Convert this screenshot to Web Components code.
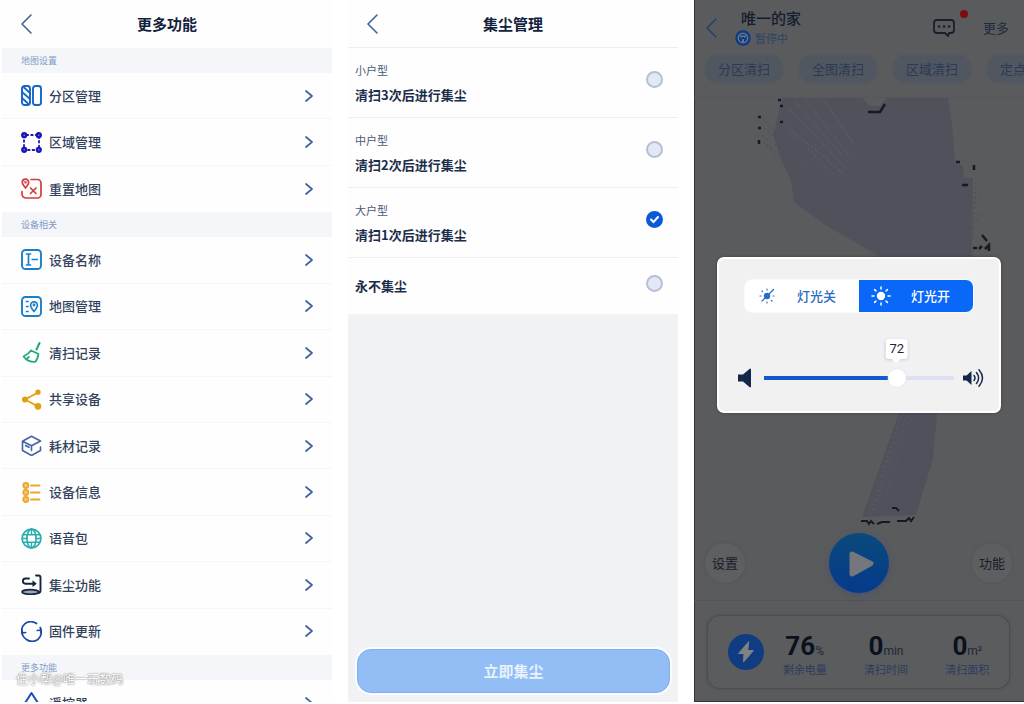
<!DOCTYPE html>
<html lang="zh-CN">
<head>
<meta charset="utf-8">
<meta name="viewport" content="width=device-width, initial-scale=1">
<title>扫地机器人</title>
<style>
  html, body { margin: 0; height: 100%; background: #fff; }
  body { font-family: "Noto Sans CJK SC", sans-serif; color: #1c2d4a; }
</style>
</head>
<body>
<robot-app></robot-app>

<script>
const ICONS = {
  back: ['0 0 12 20', '<path d="M11 1L2 10l9 9" stroke-width="1.6"/>'],
  next: ['0 0 10 12', '<path d="M2 1l6 5-6 5" stroke-width="1.7"/>'],
  zones: ['0 0 21 21', '<g stroke-width="1.9"><rect x="1" y="1" width="8" height="19" rx="2.5"/><rect x="12" y="1" width="8" height="19" rx="2.5"/></g><path d="M3 2.500l6 5.500M1 7l8 7M1 13l6 5.500"/>'],
  area: ['0 0 21 21', '<path d="M3 3h15v15H3z" stroke-width="1.800" stroke-dasharray="1.600 3" stroke-dashoffset="2"/><g fill="currentColor" stroke="none"><circle cx="3.200" cy="3.200" r="3.100"/><circle cx="17.800" cy="3.200" r="3.100"/><circle cx="3.200" cy="17.800" r="3.100"/><circle cx="17.800" cy="17.800" r="3.100"/></g><g fill="#8a88e0" stroke="none"><circle cx="3.200" cy="3.200" r=".8"/><circle cx="17.800" cy="3.200" r=".8"/><circle cx="3.200" cy="17.800" r=".8"/><circle cx="17.800" cy="17.800" r=".8"/></g>'],
  reset: ['0 0 21 21', '<path d="M10 1.500h6.500a3.500 3.500 0 0 1 3.500 3.500v11.500a3.500 3.500 0 0 1-3.500 3.500H5a4 4 0 0 1-4-4v-2.500M9.500 10l5.500 5.500M15 10l-5.500 5.500"/><path d="M4.500 10C2 7 1.300 5.800 1.300 4.300a3.200 3.200 0 0 1 6.400 0C7.700 5.800 7 7 4.500 10z"/><circle cx="4.500" cy="4.300" r=".5"/>'],
  name: ['0 0 21 21', '<rect x="1" y="1" width="19" height="19" rx="3.500" stroke-width="1.900"/><path d="M5.500 5h4M5.500 16h4M7.500 5v11"/><path d="M11 10.500h5.500" stroke-width="1.300"/>'],
  map: ['0 0 21 21', '<rect x="1" y="1" width="19" height="19" rx="3.500" stroke-width="1.900"/><path d="M5.500 5.500h1.500M5.500 10.500h1.500M5.500 15.500h1.500"/><path d="M13 15.500c-2.600-3.300-3.400-4.600-3.400-6.300a3.400 3.400 0 0 1 6.800 0c0 1.700-.8 3-3.400 6.300z"/><circle cx="13" cy="9" r=".6"/>'],
  broom: ['0 0 21 21', '<path d="M18.500 1l-3 6.500" stroke-width="2"/><path d="M10 8.500l7.500 3.500M10 8.500C8 11.500 5.500 13 2.500 14.500 5 18 9 20 14 20c2-2 3-5 3.500-8M6.500 16l1.500-1.200"/>'],
  share: ['0 0 21 21', '<path d="M17 3.500L4 10.500l13 7" stroke-width="1.900"/><g fill="currentColor"><circle cx="17" cy="3.200" r="1.800"/><circle cx="4" cy="10.500" r="2.200"/><circle cx="17" cy="17.300" r="2.500"/></g>'],
  box: ['0 0 21 21', '<path d="M1.500 6.500v9l9 5M19.500 12v3.500l-9 5M1.500 6.200l9-5 9 4.800-9 4.800zM10.500 11v4.500M4.500 10.500l3.500 1.800" stroke-width="1.600"/>'],
  list: ['0 0 21 21', '<path d="M10 3.500h8.500M10 10.500h8.500M10 17.500h8.500" stroke-width="1.900"/><g fill="#f4c672"><circle cx="4.800" cy="3.500" r="2.600"/><circle cx="4.800" cy="10.500" r="2.600"/><circle cx="4.800" cy="17.500" r="2.600"/></g>'],
  globe: ['0 0 21 21', '<circle cx="10.500" cy="10.500" r="9.400"/><ellipse cx="10.500" cy="10.500" rx="4.600" ry="9.300"/><path d="M2 6.800h17M2 14.200h17M10.500 1v5M10.500 15v5M1.500 10.500h4.200M15.300 10.500h4.200" stroke-width="1.500"/>'],
  dust: ['0 0 21 21', '<path d="M15 1.500h2.500q2 0 2 2v13q0 2.500-2.500 2.500M12.500 9.700H4.500a2.600 2.600 0 0 1 0-5.200H8" stroke-width="1.900"/><path d="M11.500 6.300l4.300 3.400-4.300 3.400z" fill="currentColor" stroke="none"/><ellipse cx="9.500" cy="18" rx="8.500" ry="2.300" fill="#9aa6b8"/>'],
  refresh: ['0 0 21 21', '<path d="M1.800 14.500A9.300 9.300 0 0 1 15.500 2.500M19.200 6.500A9.300 9.300 0 0 1 5.500 18.500M1 8.500l.5 3.500 3.200-.5M20 12.500l-.5-3.500-3.200.5M5.500 18.500A9.300 9.300 0 0 1 1.800 14.500" stroke-width="1.700"/>'],
  remote: ['0 0 21 21', '<path d="M4 11L10.500 1 17 11v7H4z" stroke-width="2"/>'],
  chat: ['0 0 22 20', '<path d="M4 2h14q3 0 3 3v7q0 3-3 3h-2l-1 3-3-3H4q-3 0-3-3V5q0-3 3-3z" stroke-width="1.800"/><path d="M6 8.500h.1M11 8.500h.1M16 8.500h.1" stroke-width="2.600"/>'],
  robot: ['0 0 16 16', '<circle cx="8" cy="8" r="7.700" fill="#0b3a86" stroke="none"/><circle cx="8" cy="8" r="4.700" stroke="#6d7683" stroke-width="1.500"/><path d="M4 5.500h8l-3 3v4H7v-4z" fill="#6d7683" stroke="none"/><circle cx="8" cy="8" r="1.300" fill="#0b3a86" stroke="none"/>'],
  lamp: ['0 0 20 20', '<circle cx="10" cy="10" r="4.200" fill="currentColor" stroke="none"/><path d="M10 1v2M10 17v2M1 10h2M17 10h2M3.600 3.600L5 5M15 15l1.400 1.400M3.600 16.400L5 15M15 5l1.400-1.400" stroke-width="1.500"/>'],
  lampOff: ['0 0 20 20', '<circle cx="10" cy="10" r="3.200" fill="currentColor" stroke="none"/><path d="M10 3v1M10 16v1M3 10h1M16 10h1M5 5l.6.6M14.400 14.400l.6.600M5 15L16.500 3.500" stroke-width="1.200"/>'],
  mute: ['0 0 14 20', '<path d="M0 6.500h5l7-6q1 0 1 1v17q0 1-1 1l-7-6H0z" fill="currentColor" stroke="none"/>'],
  loud: ['0 0 22 20', '<path d="M0 7.500h3.500l5-4.500v14l-5-4.500H0z" fill="currentColor" stroke="none"/><path d="M11 7.500q2 2.500 0 5M13.500 4.500q4.200 5.500 0 11M16 1.800q7 8.200 0 16.400" stroke-width="1.500"/>'],
  play: ['0 0 60 60', '<path d="M23 21l19 9.500-19 10.500z" fill="currentColor" stroke-width="5"/>'],
  bolt: ['0 0 36 36', '<path d="M20.500 8L10.500 19.500h5.500L15.500 28l10-11.500H20z" fill="currentColor" stroke-width="1"/>']
};

function define(name, html, setup) {
  const template = document.createElement('template');
  template.innerHTML = html;
  customElements.define(name, class extends HTMLElement {
    connectedCallback() {
      if (this.shadowRoot) return;
      const root = this.attachShadow({ mode: 'open' });
      root.append(template.content.cloneNode(true));
      if (setup) setup(root, this);
    }
  });
}

const RESET = `
  * { box-sizing: border-box; }
  button { font: inherit; color: inherit; background: none; border: 0; padding: 0; margin: 0; cursor: pointer; }
  h1, h2, p { margin: 0; font: inherit; }
`;

define('app-icon', `<style>
  :host { display: block; flex: none; line-height: 0; }
  svg { display: block; width: 100%; height: 100%; fill: none; stroke: currentColor; stroke-width: 1.7; stroke-linecap: round; stroke-linejoin: round; }
</style><svg aria-hidden="true"></svg>`, (root, host) => {
  const [box, shapes] = ICONS[host.getAttribute('name')];
  const svg = root.querySelector('svg');
  svg.setAttribute('viewBox', box);
  svg.innerHTML = shapes;
});

define('nav-header', `<style>${RESET}
  :host { display: grid; grid-template-columns: 48px 1fr 48px; align-items: center; flex: none; height: 48px; background: #fefefe; }
  button { justify-self: start; padding-left: 18px; color: #42629c; }
  app-icon { width: 12px; height: 20px; }
  h1 { text-align: center; font-size: 15px; line-height: 24px; font-weight: 700; color: #12213c; }
</style>
<button type="button" aria-label="返回"><app-icon name="back"></app-icon></button><h1><slot></slot></h1>`);

define('menu-row', `<style>${RESET}
  :host { display: flex; flex: 1 0 46px; background: #fefefe; border-bottom: 1px solid #f5f6f9; box-sizing: border-box; }
  :host(:last-of-type) { border-bottom-color: transparent; }
  button { flex: 1; display: flex; align-items: center; gap: 7px; padding: 0 18px 0 19px; text-align: left; }
  .mark { width: 21px; height: 21px; }
  span { flex: 1; font-size: 13px; line-height: 20px; font-weight: 500; color: #33425c; }
  .go { width: 10px; height: 12px; color: #42629c; }
</style>
<button type="button"><span><slot></slot></span><app-icon class="go" name="next"></app-icon></button>`,
(root, host) => {
  const icon = document.createElement('app-icon');
  icon.className = 'mark';
  icon.setAttribute('name', host.getAttribute('icon'));
  icon.style.color = host.getAttribute('tint');
  root.querySelector('button').prepend(icon);
});

define('menu-group', `<style>${RESET}
  :host { display: flex; flex-direction: column; flex: var(--rows, 1) 0 auto; }
  h2 { flex: none; height: 25px; padding-left: 19px; font-size: 9px; line-height: 25px; color: #7f9ac6; background: #f5f6fa; }
</style><h2></h2><slot></slot>`, (root, host) => {
  root.querySelector('h2').textContent = host.getAttribute('label');
  host.style.setProperty('--rows', host.children.length);
});

define('settings-panel', `<style>
  :host { display: flex; flex-direction: column; position: relative; overflow: hidden; background: #fefefe; }
  .cut { flex: 0 0 47px; overflow: hidden; }
  .credit { position: absolute; left: 14px; bottom: 14px; font-size: 12px; line-height: 18px; color: #fff; text-shadow: 0 0 2px #777, 0 0 1px #999; }
</style>
<nav-header>更多功能</nav-header>
<menu-group label="地图设置">
  <menu-row icon="zones" tint="#1466c8">分区管理</menu-row>
  <menu-row icon="area" tint="#1a16b4">区域管理</menu-row>
  <menu-row icon="reset" tint="#d23c3c">重置地图</menu-row>
</menu-group>
<menu-group label="设备相关">
  <menu-row icon="name" tint="#1b7fc8">设备名称</menu-row>
  <menu-row icon="map" tint="#1b7fc8">地图管理</menu-row>
  <menu-row icon="broom" tint="#1fa878">清扫记录</menu-row>
  <menu-row icon="share" tint="#e0a010">共享设备</menu-row>
  <menu-row icon="box" tint="#4464a4">耗材记录</menu-row>
  <menu-row icon="list" tint="#eba62c">设备信息</menu-row>
  <menu-row icon="globe" tint="#2cacb0">语音包</menu-row>
  <menu-row icon="dust" tint="#16243e">集尘功能</menu-row>
  <menu-row icon="refresh" tint="#1f4aa8">固件更新</menu-row>
</menu-group>
<menu-group class="cut" label="更多功能">
  <menu-row icon="remote" tint="#1c4cc0">遥控器</menu-row>
</menu-group>
<div class="credit">住小帮@唯一玩数码</div>`);

define('dust-panel', `<style>${RESET}
  :host { display: flex; flex-direction: column; background: #f1f2f4; }
  nav-header, .row { border-bottom: 1px solid #eceef1; }
  fieldset { margin: 0; padding: 0; border: 0; min-width: 0; }
  .row { display: flex; align-items: center; height: 70px; padding: 0 15px 0 7px; background: #fefefe; }
  .row.single { height: 56px; border: 0; }
  .text { flex: 1; display: flex; flex-direction: column; gap: 5px; }
  small { font-size: 11px; line-height: 20px; color: #4a5a75; }
  strong { font-size: 13px; line-height: 20px; font-weight: 700; color: #1c2d4a; }
  input { appearance: none; flex: none; width: 17px; height: 17px; margin: 0 0 6px; border: 2px solid #b6c0d2; border-radius: 50%; background: #e3e8f6; }
  input:checked { border-color: #0a5ad8; background: #0a5ad8 url('data:image/svg+xml,<svg xmlns="http://www.w3.org/2000/svg" viewBox="0 0 13 13" fill="none" stroke="white" stroke-width="2" stroke-linecap="round"><path d="M3 6.500l2.500 2.500 4.500-5"/></svg>') center / 13px 13px; }
  .go { margin: auto 8px 9px 9px; height: 44px; border-radius: 14px; border: 1px solid #7fafee; background: #92bdf5; box-shadow: 0 0 0 2px #fafcff; font-size: 15px; line-height: 24px; font-weight: 700; color: #e8f3ff; }
</style>
<nav-header>集尘管理</nav-header>
<fieldset aria-label="集尘频率">
  <label class="row"><span class="text"><small>小户型</small><strong>清扫3次后进行集尘</strong></span><input type="radio" name="freq"></label>
  <label class="row"><span class="text"><small>中户型</small><strong>清扫2次后进行集尘</strong></span><input type="radio" name="freq"></label>
  <label class="row"><span class="text"><small>大户型</small><strong>清扫1次后进行集尘</strong></span><input type="radio" name="freq" checked></label>
  <label class="row single"><span class="text"><strong>永不集尘</strong></span><input type="radio" name="freq"></label>
</fieldset>
<button class="go" type="button">立即集尘</button>`);

define('mode-chip', `<style>${RESET}
  :host { display: block; flex: none; }
  button { display: block; width: 78px; height: 28px; border-radius: 14px; background: #515761; box-shadow: 0 0 2px #4f555f; font-size: 13px; line-height: 28px; color: #2b3a55; white-space: nowrap; }
</style><button type="button"><slot></slot></button>`);

define('stat-item', `<style>${RESET}
  :host { display: flex; flex-direction: column; align-items: center; padding-top: 6px; white-space: nowrap; }
  .value { font: 700 26px/28px Roboto, sans-serif; color: #0c121d; }
  .unit { font: 400 12px/14px Roboto, sans-serif; color: #1d2839; }
  .label { font-size: 11px; line-height: 18px; color: #2b3d5c; }
</style><div><span class="value"></span><span class="unit"></span></div><div class="label"><slot></slot></div>`, (root, host) => {
  root.querySelector('.value').textContent = host.getAttribute('value');
  root.querySelector('.unit').textContent = host.getAttribute('unit');
});

define('floor-map', `<style>
  :host { display: block; }
  svg { display: block; width: 100%; height: 100%; fill: none; }
</style>
<svg viewBox="0 0 330 503" preserveAspectRatio="xMidYMin slice" aria-hidden="true">
  <path fill="#50515b" d="M88 0h80l8 8h10l6-8h62l3 20 2 16 2 28 8 4 1 12h9l-1 74-35 161-4 46-17 56-54 2 39-110 30-115-17-12-40-27-47-27-33-24-3-21-10-22-8-24z"/>
  <g stroke="#5c5d63" stroke-width="1" stroke-dasharray="9 2 3 1"><path d="M101 4l48 54M112 2l48 62M129 0l32 48M94 10l62 64M85 22l65 54"/></g>
  <g stroke="#5c5d63" stroke-width="1.5" stroke-dasharray="1 4"><path d="M96 34l46 44M104 28l42 46M78 24l40 52M92 22l44 54M206 320l-32 98M211 322l-34 96M216 320l-30 96M200 344l-22 70"/></g>
  <g stroke="#4b4c56" stroke-width="1" stroke-dasharray="2 3"><path d="M68 20l20 22M70 30l22 18M68 38l26 18M72 46l24 18M70 44l28 30 32 27 48 30M284 106l4-12M283 123l3-9M282 84l-3 56"/></g>
  <g stroke="#181922" stroke-width="2.5">
    <path d="M84 2h3M86 8h3M64 19h3M64 30h3M65 42v4M86 24h3M174 14h12l5-8M262 64h4M280 67v5M268 87h6M288 137l5 6M279 150h4M285 151l3-3M291 151l4-4v6"/>
    <path stroke-width="2" d="M167 423h6l2 3 2-3 3 3M183 426l5-2h8M198 410h4l3 3M203 423h9l3-3 2 3 3-4"/>
  </g>
</svg>`);

define('light-dialog', `<style>${RESET}
  :host { display: flex; flex-direction: column; background: #f1f1f2; border: 2px solid #fff; border-radius: 7px; padding: 20px 14px 20px 19px; box-shadow: 0 0 3px #3c3d40; box-sizing: border-box; }
  .switch { display: grid; grid-template-columns: 1fr 1fr; height: 34px; margin: 0 11px 0 6px; border: 1px solid #fafafb; border-radius: 8px; overflow: hidden; background: #fff; }
  .switch button { display: flex; align-items: center; gap: 20px; padding-left: 12px; font-size: 13px; line-height: 20px; font-weight: 500; color: #2a6cc4; }
  .switch button[aria-pressed="true"] { background: #0a68f8; color: #fff; }
  .switch app-icon { width: 20px; height: 20px; }
  .volume { display: flex; align-items: center; margin-top: 55px; color: #16284a; }
  .mute { width: 14px; height: 20px; margin-right: 12px; }
  .loud { width: 22px; height: 20px; margin-left: 9px; }
  .track { position: relative; flex: 1; display: flex; --thumb: calc(9px + (100% - 18px) * 0.72); }
  input { appearance: none; width: 100%; height: 20px; margin: 0; background: linear-gradient(90deg, #1458d0 70%, #dde2f2 70%) center / 100% 4px no-repeat; }
  input::-webkit-slider-thumb { appearance: none; width: 18px; height: 18px; border-radius: 50%; background: #fff; box-shadow: 0 0 2px #d8dce6; }
  output { position: absolute; left: var(--thumb); bottom: 29px; transform: translateX(-50%); padding: 0 4px; border-radius: 3px; background: #fff; box-shadow: 0 1px 3px #c4cad6; font: 400 13px/20px Roboto, sans-serif; color: #1c2536; }
  output::after { content: ""; position: absolute; left: 50%; bottom: -3px; width: 7px; height: 7px; margin-left: -4px; background: #fff; transform: rotate(45deg); }
</style>
<div class="switch" role="group" aria-label="灯光">
  <button type="button" aria-pressed="false"><app-icon name="lampOff"></app-icon>灯光关</button>
  <button type="button" aria-pressed="true"><app-icon name="lamp"></app-icon>灯光开</button>
</div>
<div class="volume">
  <app-icon class="mute" name="mute"></app-icon>
  <div class="track"><input id="volume" type="range" min="0" max="100" value="72" aria-label="音量"><output for="volume">72</output></div>
  <app-icon class="loud" name="loud"></app-icon>
</div>`);

define('map-panel', `<style>${RESET}
  :host { display: flex; flex-direction: column; position: relative; overflow: hidden; background: #5a5b5d; box-shadow: inset 1px -1px 0 #333437; }
  header { flex: none; height: 98px; border-bottom: 1px solid #54565b; }
  .bar { display: flex; align-items: center; height: 55px; padding: 0 15px 0 11px; color: #1f2a3e; }
  .back { width: 12px; height: 20px; color: #26406a; }
  .home { flex: 1; margin-left: 18px; padding-bottom: 2px; }
  h1 { padding-left: 6px; font-size: 15px; line-height: 22px; font-weight: 500; color: #141d2e; }
  .state { display: flex; align-items: center; gap: 4px; font-size: 11px; line-height: 18px; color: #2f4365; }
  .state app-icon { width: 16px; height: 16px; }
  .chat { position: relative; margin-right: 28px; }
  .chat app-icon { width: 22px; height: 20px; color: #17202f; }
  .chat i { position: absolute; right: -13px; top: -8px; width: 8px; height: 8px; border-radius: 50%; background: #7c0d12; }
  .more { font-size: 13px; line-height: 20px; }
  .chips { display: flex; gap: 16px; padding-left: 11px; }
  main { position: relative; flex: 1; display: flex; align-items: flex-end; }
  floor-map { position: absolute; inset: 0; }
  .controls { position: relative; flex: 1; display: flex; align-items: center; justify-content: space-between; padding: 0 12px 7px 11px; }
  .round { width: 40px; height: 40px; border-radius: 50%; background: #5e5f61; box-shadow: 0 0 3px #515356; font-size: 13px; line-height: 20px; color: #161d28; }
  .play { width: 60px; height: 60px; border-radius: 50%; background: linear-gradient(#0a4a7c, #063a8c); box-shadow: 0 2px 6px #45536d; color: #74777c; }
  .play app-icon { width: 60px; height: 60px; }
  footer { flex: none; padding: 14px 14px 13px 13px; border-top: 1px solid #525457; }
  .card { display: grid; grid-template-columns: 36px 1fr 1fr 1fr; align-items: center; height: 74px; padding: 0 1px 0 20px; border: 1px solid #4a4d51; border-radius: 13px; box-shadow: 0 0 3px #4b4e52; background: #5b5c5e; }
  .battery { width: 36px; height: 36px; border-radius: 50%; background: #103c82; color: #808284; }
  light-dialog { position: absolute; left: 23px; right: 23px; top: 257px; height: 156px; }
</style>
<header>
  <div class="bar">
    <button type="button" aria-label="返回"><app-icon class="back" name="back"></app-icon></button>
    <div class="home"><h1>唯一的家</h1><p class="state"><app-icon name="robot"></app-icon>暂停中</p></div>
    <button class="chat" type="button" aria-label="消息"><app-icon name="chat"></app-icon><i></i></button>
    <button class="more" type="button">更多</button>
  </div>
  <div class="chips"><mode-chip>分区清扫</mode-chip><mode-chip>全图清扫</mode-chip><mode-chip>区域清扫</mode-chip><mode-chip>定点清扫</mode-chip></div>
</header>
<main>
  <floor-map></floor-map>
  <div class="controls">
    <button class="round" type="button">设置</button>
    <button class="play" type="button" aria-label="开始"><app-icon name="play"></app-icon></button>
    <button class="round" type="button">功能</button>
  </div>
</main>
<footer><div class="card">
  <app-icon class="battery" name="bolt"></app-icon>
  <stat-item value="76" unit="%">剩余电量</stat-item>
  <stat-item value="0" unit="min">清扫时间</stat-item>
  <stat-item value="0" unit="m²">清扫面积</stat-item>
</div></footer>
<light-dialog role="dialog" aria-label="灯光与音量"></light-dialog>`);

define('robot-app', `<style>
  :host { display: grid; grid-template-columns: repeat(3, minmax(0, 1fr)); gap: 16px; min-height: 100vh; padding: 0 0 2px 2px; box-sizing: border-box; }
</style><settings-panel></settings-panel><dust-panel></dust-panel><map-panel></map-panel>`);
</script>
</body>
</html>
